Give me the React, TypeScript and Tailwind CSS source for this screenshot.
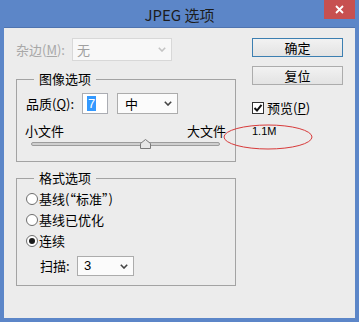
import React from "react";

const FONT = { fontFamily: "'Noto Sans CJK SC', 'Noto Sans', sans-serif" };

function Chevron({ color = "#444" }: { color?: string }) {
  return (
    <svg width="8" height="5" viewBox="0 0 8 5" className="shrink-0">
      <polyline points="0.8,0.8 4,4 7.2,0.8" fill="none" stroke={color} strokeWidth="1.6" />
    </svg>
  );
}

function Radio({ checked }: { checked?: boolean }) {
  return (
    <span className="w-[12px] h-[12px] rounded-full border border-[#6e6e6e] bg-white flex items-center justify-center shrink-0">
      {checked && <span className="w-[6px] h-[6px] rounded-full bg-[#1a1a1a]" />}
    </span>
  );
}

export default function App() {
  return (
    <div className="w-[359px] h-[324px] bg-white overflow-hidden" style={FONT}>
      <div className="h-[322px] bg-[#5c86c8] flex flex-col px-[4px] pb-[4px]">
        {/* title bar */}
        <div className="h-[27px] grid grid-cols-[1fr_auto_1fr] items-start">
          <div />
          <div className="h-[27px] flex items-center text-[15px] text-[#1c1c1c] leading-none pt-[1px]">JPEG 选项</div>
          <div className="justify-self-end w-[31px] h-[19px] bg-[#c75050] flex items-center justify-center">
            <svg width="9" height="9" viewBox="0 0 9 9">
              <path d="M1 1 L8 8 M8 1 L1 8" stroke="white" strokeWidth="1.8" />
            </svg>
          </div>
        </div>
        {/* content */}
        <div className="flex-1 bg-[#ececec] flex relative border-t border-[#4f74b0]">
          {/* left column */}
          <div className="w-[232px] pl-[12px] flex flex-col">
            <div className="mt-[10px] h-[23px] flex items-center">
              <span className="w-[56px] text-[13px] leading-[16px] text-[#a8a8a8]">
                杂边(<span className="underline">M</span>):
              </span>
              <div className="w-[100px] h-[23px] border border-[#d8d8d8] bg-[#f8f8f8] flex items-center justify-between pl-[4px] pr-[5px]">
                <span className="text-[13px] leading-[16px] text-[#a0a0a0]">无</span>
                <Chevron color="#c4c4c4" />
              </div>
            </div>

            <fieldset className="mt-[9px] h-[92px] w-[220px] border border-[#a3a3a3] pl-[9px] pr-[9px]">
              <legend className="ml-[8px] px-[5px] text-[13px] leading-[18px] text-black">图像选项</legend>
              <div className="mt-[5px] h-[21px] flex items-center">
                <span className="w-[56px] text-[13px] leading-[16px] text-black">
                  品质(<span className="underline">Q</span>):
                </span>
                <div className="w-[26px] h-[21px] border border-[#abadb3] bg-white flex items-center pl-[4px]">
                  <span className="bg-[#3399ff] text-white text-[13px] leading-[15px] px-[1px]" style={{ fontFamily: "'Liberation Sans', sans-serif" }}>7</span>
                </div>
                <div className="ml-[9px] w-[61px] h-[21px] border border-[#acacac] bg-[#fbfbfb] flex items-center justify-between pl-[7px] pr-[5px]">
                  <span className="text-[13px] leading-[16px] text-black">中</span>
                  <Chevron />
                </div>
              </div>
              <div className="mt-[9px] h-[16px] flex items-center justify-between text-[13px] leading-[16px] text-black">
                <span className="-ml-[1px]">小文件</span>
                <span>大文件</span>
              </div>
              <div className="relative h-[10px] ml-[5px] mr-[6px] flex items-center">
                <div className="w-full h-[4px] rounded-full bg-[#cfcfcf] border border-[#9c9c9c]" />
                <svg className="absolute left-[109px] top-0" width="11" height="10" viewBox="0 0 11 10">
                  <polygon points="5.5,0.5 10.5,4.5 10.5,9.5 0.5,9.5 0.5,4.5" fill="#e6e6e6" stroke="#7a7a7a" strokeWidth="1" />
                </svg>
              </div>
            </fieldset>

            <fieldset className="mt-[7px] h-[117px] w-[220px] border border-[#a3a3a3] pl-[9px] pr-[9px]">
              <legend className="ml-[8px] px-[5px] text-[13px] leading-[18px] text-black">格式选项</legend>
              <div className="mt-[1px] flex flex-col">
                <div className="h-[21px] flex items-center gap-[1px]">
                  <Radio />
                  <span className="text-[13px] leading-[16px] text-black">基线(“标准”)</span>
                </div>
                <div className="h-[21px] flex items-center gap-[1px]">
                  <Radio />
                  <span className="text-[13px] leading-[16px] text-black">基线已优化</span>
                </div>
                <div className="h-[21px] flex items-center gap-[1px]">
                  <Radio checked />
                  <span className="text-[13px] leading-[16px] text-black">连续</span>
                </div>
              </div>
              <div className="mt-[5px] h-[20px] flex items-center pl-[14px]">
                <span className="w-[37px] text-[13px] leading-[16px] text-black">扫描:</span>
                <div className="w-[57px] h-[20px] border border-[#acacac] bg-[#fbfbfb] flex items-center justify-between pl-[6px] pr-[5px]">
                  <span className="text-[13px] leading-[16px] text-black" style={{ fontFamily: "'Liberation Sans', sans-serif" }}>3</span>
                  <Chevron />
                </div>
              </div>
            </fieldset>
          </div>

          {/* right column */}
          <div className="ml-[16px] flex flex-col">
            <div className="mt-[10px] w-[91px] h-[19px] border border-[#3c7fb1] bg-gradient-to-b from-[#f2f2f2] to-[#e3e3e3] flex items-center justify-center text-[13px] leading-[16px] text-black">
              确定
            </div>
            <div className="mt-[9px] w-[91px] h-[19px] border border-[#acacac] bg-gradient-to-b from-[#f2f2f2] to-[#e3e3e3] flex items-center justify-center text-[13px] leading-[16px] text-black">
              复位
            </div>
            <div className="mt-[16px] h-[13px] flex items-center gap-[3px]">
              <span className="w-[12px] h-[12px] border border-[#333] bg-white flex items-center justify-center">
                <svg width="10" height="10" viewBox="0 0 10 10">
                  <polyline points="1.5,5 4,7.5 8.5,1.8" fill="none" stroke="#111" strokeWidth="2" />
                </svg>
              </span>
              <span className="text-[13px] leading-[16px] text-black">
                预览(<span className="underline">P</span>)
              </span>
            </div>
            <div className="mt-[10px] h-[14px] flex items-center text-[11px] leading-[14px] text-black" style={{ fontFamily: "'Liberation Sans', sans-serif" }}>
              1.1M
            </div>
          </div>

          <svg className="absolute left-[218px] top-[95px]" width="92" height="28" viewBox="0 0 92 28">
            <ellipse cx="46" cy="14" rx="44" ry="12" fill="none" stroke="#d83a3a" strokeWidth="1" />
          </svg>
        </div>
      </div>
    </div>
  );
}
